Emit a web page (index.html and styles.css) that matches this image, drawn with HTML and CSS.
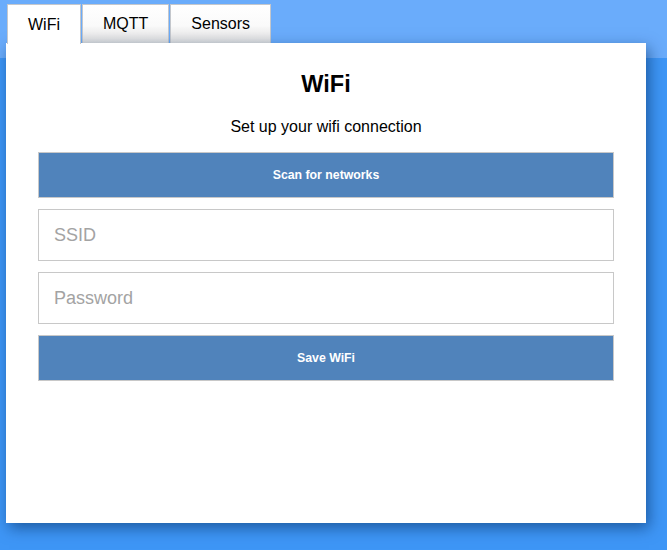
FILE: index.html
```html
<!DOCTYPE html>
<html>
<head>
<meta charset="utf-8">
<link rel="stylesheet" href="styles.css">
</head>
<body>
<div class="page">
  <nav class="tabs">
    <div class="tab active">WiFi</div>
    <div class="tab">MQTT</div>
    <div class="tab">Sensors</div>
  </nav>
  <main class="card">
    <h2 class="title">WiFi</h2>
    <p class="subtitle">Set up your wifi connection</p>
    <button class="btn">Scan for networks</button>
    <input class="field" type="text" placeholder="SSID">
    <input class="field" type="password" placeholder="Password">
    <button class="btn">Save WiFi</button>
  </main>
</div>
</body>
</html>
```
FILE: styles.css
```css
html, body {
  margin: 0;
  padding: 0;
  height: 100%;
}
body {
  font-family: "Liberation Sans", Arial, sans-serif;
  background: linear-gradient(to bottom, #6aacfb 0, #6aacfb 58px, #3e96f6 58px, #3e96f6 100%);
  color: #000;
}
.page {
  padding: 4px 0 0 6px;
  width: 640px;
}
.tabs {
  display: flex;
  gap: 1px;
  margin-left: 1px;
  height: 39px;
}
.tab {
  box-sizing: border-box;
  height: 39px;
  padding: 0 20px;
  display: flex;
  align-items: center;
  font-size: 16px;
  border: 1px solid #c4c7cc;
  border-bottom: none;
  background: linear-gradient(to bottom, #ffffff 0%, #fafafa 55%, #dedede 100%);
}
.tab.active {
  background: #fff;
  position: relative;
  z-index: 2;
  height: 40px;
}
.card {
  display: flex;
  flex-direction: column;
  background: #fff;
  height: 480px;
  box-sizing: border-box;
  padding: 0 32px;
  box-shadow: 3px 5px 14px rgba(0, 40, 90, 0.55);
  position: relative;
  z-index: 1;
}
.title {
  margin: 28px 0 0;
  font-size: 23.5px;
  line-height: 26px;
  font-weight: bold;
  text-align: center;
}
.subtitle {
  margin: 20px 0 0;
  font-size: 16px;
  line-height: 20px;
  text-align: center;
}
.btn {
  margin-top: 15px;
  height: 46px;
  border: 1px solid #c8c8c8;
  background: #5083bb;
  color: #fff;
  font-family: "Liberation Sans", Arial, sans-serif;
  font-size: 12.3px;
  font-weight: bold;
  padding: 0;
}
.field {
  margin-top: 11px;
  height: 52px;
  box-sizing: border-box;
  border: 1px solid #c8c8c8;
  padding: 0 15px;
  font-family: "Liberation Sans", Arial, sans-serif;
  font-size: 18px;
  outline: none;
}
.field::placeholder {
  color: #a3a3a3;
}
.field + .btn {
  margin-top: 11px;
}
```
